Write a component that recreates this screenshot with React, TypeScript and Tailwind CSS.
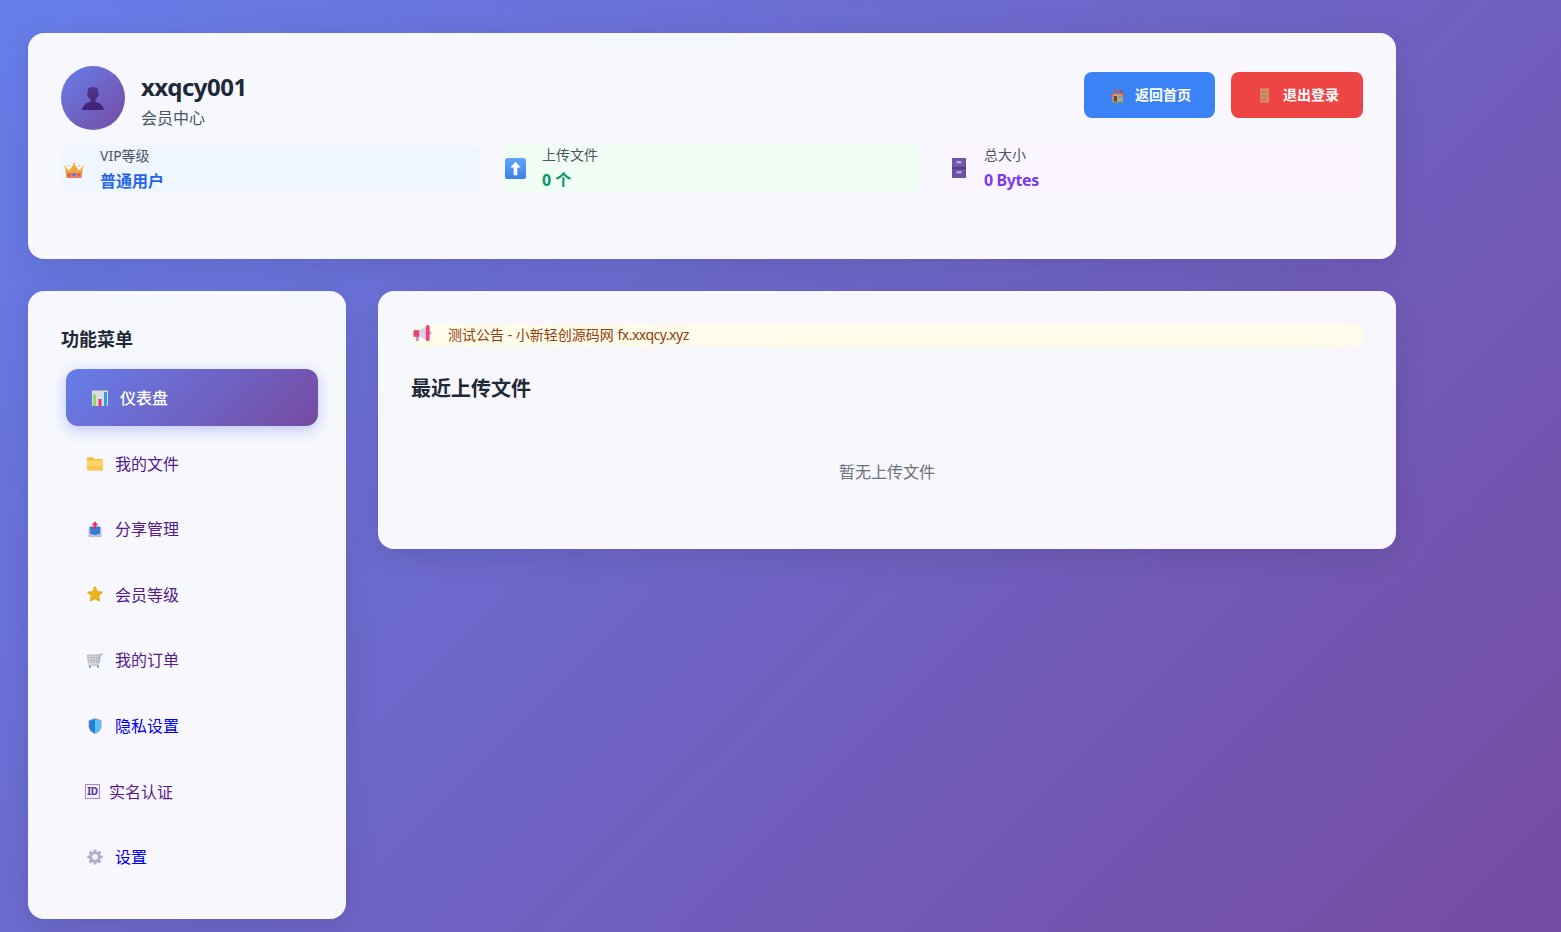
import React from "react";

const Silhouette = () => (
  <svg viewBox="0 0 24 24" className="w-6 h-6" aria-hidden>
    <defs>
      <linearGradient id="sil" x1="0" y1="0" x2="0" y2="1">
        <stop offset="0" stopColor="#53358c" />
        <stop offset="1" stopColor="#3f2272" />
      </linearGradient>
    </defs>
    <path fill="url(#sil)" d="M6.800 4C7 1.800 8.800 1 12 1s5 .8 5.200 3l.2 3c.6.200.9.700.8 1.300-.1.700-.5 1.100-1 1.200-.4 1.700-1.500 3-2.700 3.600V16c3.600.6 7.400 2.400 8.500 8H1C2.100 18.400 5.900 16.600 9.500 16v-2.900C8.300 12.500 7.200 11.200 6.800 9.500c-.5-.1-.9-.5-1-1.200-.1-.6.200-1.100.8-1.300z" />
  </svg>
);

const Crown = () => (
  <svg viewBox="0 0 20 20" className="w-5 h-5" aria-hidden>
    <path fill="#f2a33c" d="M1 6l4 3.500L10 3l5 6.500L19 6l-1.600 11H2.600z" />
    <path fill="#e77f5c" d="M2.200 11.500c3 1.200 12.600 1.200 15.600 0l-.6 5.500H2.800z" />
    <circle cx="10" cy="2.800" r="1.200" fill="#f9c23c" />
    <circle cx="1.200" cy="5.800" r="1" fill="#f9c23c" />
    <circle cx="18.800" cy="5.800" r="1" fill="#f9c23c" />
    <circle cx="5" cy="4.800" r=".9" fill="#f9c23c" />
    <circle cx="15" cy="4.800" r=".9" fill="#f9c23c" />
    <circle cx="10" cy="13.500" r="1.700" fill="#3b82f6" />
    <circle cx="5.200" cy="13.800" r="1" fill="#e0355f" />
    <circle cx="14.800" cy="13.800" r="1" fill="#e0355f" />
  </svg>
);

const UpArrow = () => (
  <svg viewBox="0 0 20 20" className="w-[21px] h-[21px]" aria-hidden>
    <defs>
      <linearGradient id="upb" x1="0" y1="0" x2="0" y2="1">
        <stop offset="0" stopColor="#60a5fa" />
        <stop offset="1" stopColor="#3c7fe6" />
      </linearGradient>
    </defs>
    <rect x="0" y="0" width="20" height="20" rx="2.500" fill="url(#upb)" />
    <path fill="#fff" d="M10 3.500l5 5.500h-3.200v7.500H8.200V9H5z" />
  </svg>
);

const Cabinet = () => (
  <svg viewBox="0 0 14 20" className="w-[14px] h-5" aria-hidden>
    <rect width="14" height="20" fill="#5f4a94" />
    <rect x="0" y="0" width="14" height="9.500" fill="#7155ab" />
    <rect x="0" y="10.500" width="14" height="9.500" fill="#6d52a4" />
    <rect x="0" y="9.500" width="14" height="1" fill="#3f3166" />
    <rect x="4.500" y="3" width="5" height="2.500" fill="#b7a5e6" />
    <rect x="4.500" y="13" width="5" height="2.500" fill="#b7a5e6" />
  </svg>
);

const House = () => (
  <svg viewBox="0 0 16 16" className="w-[15px] h-[15px]" aria-hidden>
    <rect x="2.500" y="6.500" width="11" height="8" fill="#dba06d" />
    <path fill="#e8573f" d="M8 1L.6 8l1 1L8 3.200 14.400 9l1-1z" />
    <rect x="11" y="2" width="1.700" height="3" fill="#a0563c" />
    <rect x="4" y="8.500" width="3.500" height="6" fill="#6b4a3a" />
    <rect x="9" y="8.500" width="3" height="3" fill="#3bb0e6" />
    <rect x="1.500" y="14.500" width="13" height="1.200" fill="#6fae4a" />
  </svg>
);

const Door = () => (
  <svg viewBox="0 0 16 16" className="w-[15px] h-[15px]" aria-hidden>
    <rect x="3.500" y=".5" width="9" height="15" fill="#d49a6e" />
    <rect x="5" y="2" width="6" height="3.500" fill="#c4825a" />
    <rect x="5" y="6.500" width="6" height="3.500" fill="#c4825a" />
    <rect x="5" y="11" width="6" height="3.500" fill="#c4825a" />
  </svg>
);

const BarChart = () => (
  <svg viewBox="0 0 16 16" className="w-4 h-4" aria-hidden>
    <rect width="16" height="16" rx="1" fill="#dcdce2" />
    <rect x="0" y="0" width="16" height="1" fill="#a9a9b3" />
    <rect x="1" y="4.500" width="3" height="11.500" fill="#8ed866" />
    <rect x="6.500" y="9" width="3" height="7" fill="#e63a6a" />
    <rect x="12" y="2" width="3" height="14" fill="#2f9fe8" />
  </svg>
);

const Folder = () => (
  <svg viewBox="0 0 16 16" className="w-4 h-4" aria-hidden>
    <path fill="#f4b942" d="M0 3.500C0 2.700.500 2.200 1.200 2.200h4.300l1.500 1.800h8c.6 0 1 .4 1 1v1.500H0z" />
    <path fill="#ffd460" d="M0 5.200h16v9.400c0 .6-.4 1-1 1H1c-.6 0-1-.4-1-1z" />
    <path fill="#fdbd55" d="M0 11h16v3.600c0 .6-.4 1-1 1H1c-.6 0-1-.4-1-1z" opacity=".7" />
  </svg>
);

const Outbox = () => (
  <svg viewBox="0 0 16 16" className="w-4 h-4" aria-hidden>
    <path fill="#c4b8da" d="M1.500 6h13v9c0 .5-.4 1-1 1h-11c-.6 0-1-.5-1-1z" />
    <path fill="#2f80d4" d="M3 5.500h10v7.500h-2.500c-.5.7-1.300 1-2.500 1s-2-.3-2.500-1H3z" />
    <path fill="#e5305f" d="M8 .2l3.300 4H9.300v4H6.700v-4H4.700z" />
  </svg>
);

const Star = () => (
  <svg viewBox="0 0 16 16" className="w-4 h-4" aria-hidden>
    <path fill="#eeb51f" stroke="#e8ae1c" strokeWidth="1.800" strokeLinejoin="round" d="M8 1.400l2 4.400 4.800.6-3.600 3.300 1 4.700L8 12l-4.200 2.400 1-4.700L1.200 6.400 6 5.800z" />
  </svg>
);

const Cart = () => (
  <svg viewBox="0 0 17 16" className="h-4 w-[17px]" aria-hidden>
    <path fill="#e0e0e6" stroke="#a5a5ad" strokeWidth=".8" d="M.5 3h12.500l-1.200 8H1.500z" />
    <path stroke="#a5a5ad" strokeWidth=".7" fill="none" d="M.8 5.600h11.800M1 8.300h11.200M4 3l.3 8M7 3v8M10 3l-.4 8" />
    <path stroke="#8ea4c4" strokeWidth="1" fill="none" d="M11.800 11.500l1.500-9.500h2.700M1.500 13h10.500" />
    <circle cx="2.800" cy="14.800" r="1" fill="#4f88d0" />
    <circle cx="10.800" cy="14.800" r="1" fill="#4f88d0" />
  </svg>
);

const Shield = () => (
  <svg viewBox="0 0 16 16" className="w-4 h-4" aria-hidden>
    <path fill="#9fa8bd" d="M8 0l6.500 2.200v6c0 3.600-3 6.500-6.500 7.800-3.500-1.300-6.500-4.200-6.500-7.800v-6z" />
    <path fill="#1f7fd6" d="M8 1L2.300 2.900v5.300c0 3.100 2.600 5.700 5.700 6.900z" />
    <path fill="#5cc0fb" d="M8 1l5.700 1.900v5.300c0 3.100-2.600 5.700-5.700 6.900z" />
  </svg>
);

const Gear = () => (
  <svg viewBox="0 0 16 16" className="w-4 h-4" aria-hidden>
    <g fill="#b5a9cc">
      <circle cx="8" cy="8" r="5.600" />
      <rect x="6.500" y=".4" width="3" height="15.200" rx=".7" />
      <rect x="6.500" y=".4" width="3" height="15.200" rx=".7" transform="rotate(45 8 8)" />
      <rect x="6.500" y=".4" width="3" height="15.200" rx=".7" transform="rotate(90 8 8)" />
      <rect x="6.500" y=".4" width="3" height="15.200" rx=".7" transform="rotate(135 8 8)" />
    </g>
    <circle cx="8" cy="8" r="3" fill="#f3f0f8" />
  </svg>
);

const Megaphone = () => (
  <svg viewBox="0 0 20 20" className="-mt-1 w-[19px] h-[19px]" aria-hidden>
    <rect x="3" y="13" width="3" height="5" fill="#b79ad6" />
    <path fill="#ddd3e8" d="M6 6.500L14 2.500v14L6 13z" />
    <rect x="0.500" y="6.500" width="6" height="7" fill="#e9417f" />
    <rect x="13.500" y="1" width="4" height="17" rx="2" fill="#ef3f7e" />
    <rect x="17.500" y="8" width="1.500" height="3" fill="#9a8fb0" />
  </svg>
);

const IdIcon = () => (
  <span className="flex h-[15px] w-[15px] shrink-0 items-center justify-center border border-[#a58cc8] bg-[#f3effa] text-[10px] font-bold leading-none tracking-[-0.3px] text-[#52349a]">
    ID
  </span>
);

const menu = [
  { label: "我的文件", icon: <Folder />, color: "text-[#551a8b]" },
  { label: "分享管理", icon: <Outbox />, color: "text-[#551a8b]" },
  { label: "会员等级", icon: <Star />, color: "text-[#551a8b]" },
  { label: "我的订单", icon: <Cart />, color: "text-[#551a8b]", gap: "gap-[11px]" },
  { label: "隐私设置", icon: <Shield />, color: "text-[#0000ee]" },
];

function MenuItem({ icon, label, color, gap = "gap-3", pad = "pl-[26px]" }: { icon: React.ReactNode; label: string; color: string; gap?: string; pad?: string }) {
  return (
    <a className={`flex h-[57.6px] items-center rounded-xl ${pad} ${gap} text-base ${color}`}>
      {icon}
      <span className="pt-[0.8px]">{label}</span>
    </a>
  );
}

export default function App() {
  return (
    <div
      className="min-h-screen bg-[linear-gradient(135deg,#667eea_0%,#764ba2_100%)] pl-7 pt-[33px] leading-[1.6] text-[#1f2937]"
      style={{ fontFamily: '"Noto Sans", "Noto Sans CJK SC", sans-serif' }}
    >
      <div className="flex w-[1368px] flex-col gap-8">
        <header className="h-[226px] rounded-2xl bg-white/95 p-[33px] shadow-[0_8px_32px_rgba(0,0,0,0.1)]">
          <div className="flex items-start justify-between">
            <div className="flex items-center gap-4">
              <div className="flex h-16 w-16 items-center justify-center rounded-full bg-[linear-gradient(135deg,#667eea,#764ba2)]">
                <Silhouette />
              </div>
              <div>
                <h1 className="pt-[2px] text-2xl leading-[1.6] font-bold tracking-[-0.5px] text-[#1f2937]">xxqcy001</h1>
                <p className="text-base text-[#4b5563]">会员中心</p>
              </div>
            </div>
            <div className="mt-[6px] flex gap-4">
              <a className="flex h-[46px] items-center gap-[9px] rounded-lg bg-[#3b82f6] px-6 text-sm font-bold text-white">
                <span className="flex w-[18px] justify-center"><House /></span>
                <span>返回首页</span>
              </a>
              <a className="flex h-[46px] items-center gap-[10px] rounded-lg bg-[#ef4444] px-6 text-sm font-bold text-white">
                <span className="flex w-[18px] justify-center"><Door /></span>
                <span>退出登录</span>
              </a>
            </div>
          </div>
          <div className="mt-[14px] grid grid-cols-3 items-start gap-6">
            <div className="mt-px flex h-12 items-center gap-[13px] rounded-lg bg-[#eff6ff]">
              <div className="mt-[3px] flex w-[26px] justify-center"><Crown /></div>
              <div className="flex flex-col gap-[3px]">
                <div className="text-sm text-[#4b5563]">VIP等级</div>
                <div className="text-base font-bold text-[#2563eb]">普通用户</div>
              </div>
            </div>
            <div className="flex h-12 items-center gap-[15px] rounded-lg bg-[#f0fdf4]">
              <div className="flex w-6 justify-center"><UpArrow /></div>
              <div className="flex flex-col gap-[3px]">
                <div className="text-sm text-[#4b5563]">上传文件</div>
                <div className="text-base font-bold text-[#059669]">0 个</div>
              </div>
            </div>
            <div className="flex h-12 items-center gap-3 rounded-lg bg-[#faf5ff]">
              <div className="flex w-[27px] justify-center"><Cabinet /></div>
              <div className="flex flex-col gap-[3px]">
                <div className="text-sm text-[#4b5563]">总大小</div>
                <div className="text-base font-bold tracking-[-0.4px] text-[#7c3aed]">0 Bytes</div>
              </div>
            </div>
          </div>
        </header>

        <div className="flex items-start gap-8">
          <aside className="w-[318px] shrink-0 rounded-2xl bg-white/95 p-[33px] shadow-[0_8px_32px_rgba(0,0,0,0.1)]">
            <h3 className="mb-[15px] pt-px text-lg leading-[1.6] font-bold text-[#1f2937]">功能菜单</h3>
            <nav className="flex flex-col gap-2">
              <a className="flex h-[57.6px] translate-x-[5px] items-center gap-3 rounded-xl bg-[linear-gradient(135deg,#667eea,#764ba2)] pl-[26px] text-base font-medium text-white shadow-[0_4px_15px_rgba(102,126,234,0.4)]">
                <BarChart />
                <span>仪表盘</span>
              </a>
              {menu.map((m) => (
                <MenuItem key={m.label} {...m} />
              ))}
              <MenuItem icon={<IdIcon />} label="实名认证" color="text-[#551a8b]" gap="gap-[9px]" pad="pl-6" />
              <MenuItem icon={<Gear />} label="设置" color="text-[#0000ee]" />
            </nav>
          </aside>

          <main className="h-[258px] flex-1 rounded-2xl bg-white/95 p-[33px] shadow-[0_8px_32px_rgba(0,0,0,0.1)]">
            <div className="flex h-[23px] items-center gap-4 rounded-lg bg-[#fffbeb] pl-[2px] text-sm text-[#92400e]">
              <Megaphone />
              <span className="-mt-[2px]">
                测试公告 - 小新轻创源码网 <span className="tracking-[-0.5px]">fx.xxqcy.xyz</span>
              </span>
            </div>
            <h2 className="mt-[26px] text-xl leading-[1.6] font-bold text-[#1f2937]">最近上传文件</h2>
            <p className="mt-[55px] text-center text-base text-[#6b7280]">暂无上传文件</p>
          </main>
        </div>
      </div>
    </div>
  );
}
